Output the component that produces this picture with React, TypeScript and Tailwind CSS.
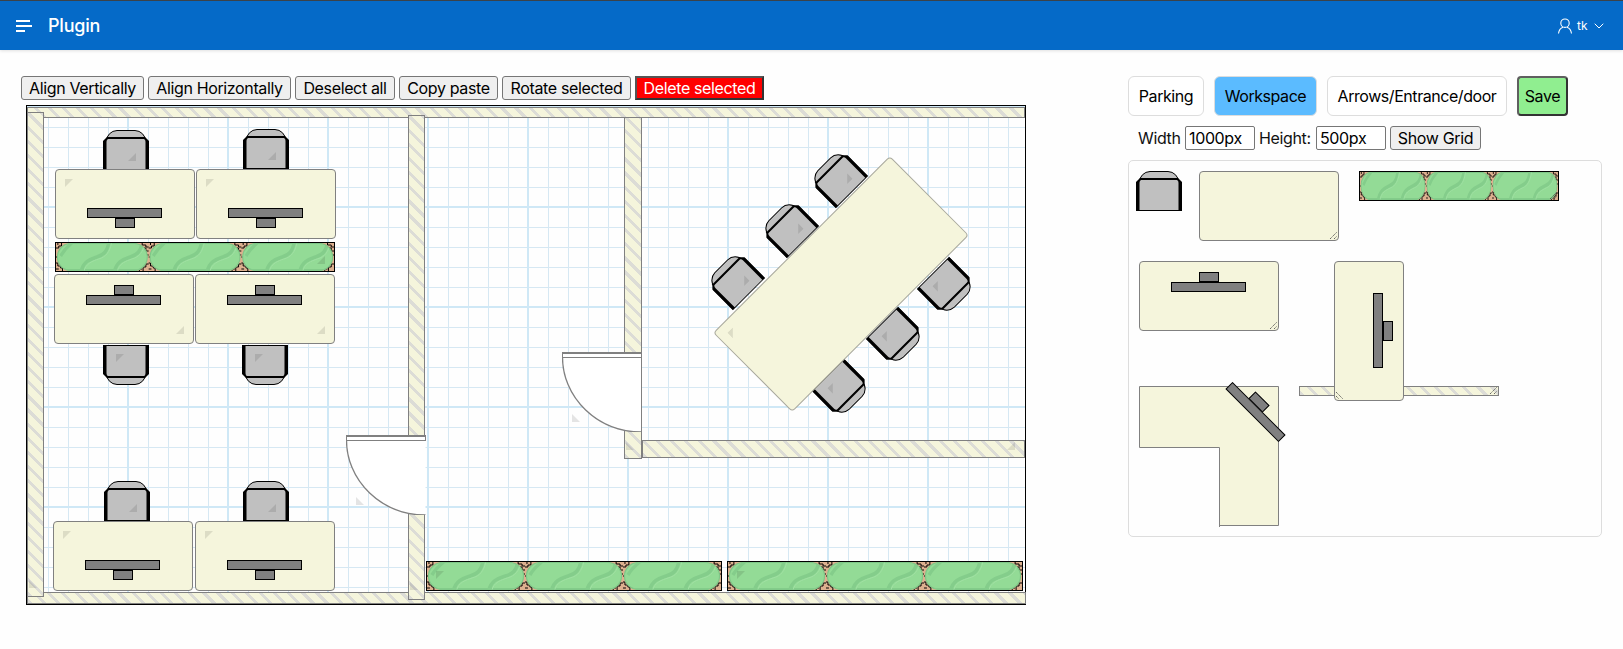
import React from "react";
import { ChevronDown } from "lucide-react";

const Tri = ({ className = "" }: { className?: string }) => (
  <div className={`absolute h-2 w-2 bg-black/10 [clip-path:polygon(100%_0,100%_100%,0_100%)] ${className}`} />
);

const Grabber = () => (
  <svg className="absolute bottom-0 right-0 h-[9px] w-[9px]" viewBox="0 0 9 9">
    <path d="M1 8 L8 1 M5 8 L8 5" stroke="#444" strokeWidth="0.8" strokeDasharray="1.4 0.6" fill="none" />
  </svg>
);

const Bar = ({ className = "" }: { className?: string }) => (
  <div className={`absolute border border-black bg-[#808080] ${className}`} />
);

function Desk({ className = "", flip = false, monitor = true, mark = false, grab = false }: { className?: string; flip?: boolean; monitor?: boolean; mark?: boolean; grab?: boolean }) {
  return (
    <div className={`absolute h-[70px] w-[140px] rounded-[4px] border border-[#808080] bg-[#f5f5dc] ${flip ? "rotate-180" : ""} ${className}`}>
      {monitor && (
        <>
          <Bar className={`top-[20px] h-[10px] w-[75px] ${flip ? "left-[32px]" : "left-[31px]"}`} />
          <Bar className="left-[59px] top-[10px] h-[10px] w-[20px]" />
        </>
      )}
      {mark && <Tri className="bottom-[9px] right-[9px]" />}
      {grab && <Grabber />}
    </div>
  );
}

function Chair({ className = "", mark = true }: { className?: string; mark?: boolean }) {
  return (
    <div className={`absolute h-[40px] w-[46px] ${className}`}>
      <svg className="block h-full w-full" viewBox="0 0 46 40">
        <path d="M3.5 11 A11 10.5 0 0 1 14 .5 H32 A11 10.5 0 0 1 42.5 11 Z" fill="#c0c0c0" stroke="#000" />
        <path d="M0 40 V11 L4 7 H42 L46 11 V40 Z" fill="#000" />
        <path d="M3.5 39 V12 Q3.5 8.5 7 8.5 H39 Q42.5 8.5 42.5 12 V39 Z" fill="#c0c0c0" />
        <path d="M5 8.5 H41" stroke="#000" />
      </svg>
      {mark && <Tri className="bottom-[9px] right-[13px]" />}
    </div>
  );
}

const crack =
  "M0 5 h3 v-2 h3 v-3 M2 0 v2 M0 20 h2 v3 h3 v2 h2 v3 M0 26 h3 M100 4 h-3 v-2 h-4 v-2 M94 5 h3 v3 h3 M100 21 h-3 v3 h-3 v4 M90 28 v-2 h3 M96 12 h4 M0 14 h2";

function Plant({ className = "", mark = "", grab = false }: { className?: string; mark?: string; grab?: boolean }) {
  return (
    <div className={`absolute h-[30px] border border-black bg-[#ddb08f] ${className}`}>
      <svg className="block h-full w-full" viewBox="0 0 300 28" preserveAspectRatio="none">
        <defs>
          <clipPath id="pill-clip">
            <rect x="1.5" y="0.5" width="97" height="27" rx="14" />
          </clipPath>
        </defs>
        {[0, 100, 200].map((x) => (
          <g key={x} transform={`translate(${x} 0)`}>
            <path d={crack} stroke="#000" strokeWidth="1" fill="none" />
            <rect x="1.5" y="0.5" width="97" height="27" rx="14" fill="#93db96" stroke="#7fc788" strokeWidth="1.2" />
            <g clipPath="url(#pill-clip)" fill="none">
              <path d="M0 27 H100" stroke="#83cc8a" strokeWidth="2" />
              <path d="M5 13 C8 8 12 4 17 0" stroke="#84cd8b" strokeWidth="3.5" />
              <path d="M27 29 C29 18 38 16 44 14 C52 12 55 8 57 0" stroke="#84cd8b" strokeWidth="3.5" />
              <path d="M63 29 C65 18 74 16 80 14 C88 12 91 8 93 0" stroke="#84cd8b" strokeWidth="3.5" />
              <path d="M30 29 C32 20 40 18 46 16 C54 14 58 9 60 0" stroke="#a0e0a3" strokeWidth="1" />
              <path d="M66 29 C68 20 76 18 82 16 C90 14 94 9 96 0" stroke="#a0e0a3" strokeWidth="1" />
            </g>
          </g>
        ))}
      </svg>
      {mark && <Tri className={mark} />}
      {grab && <Grabber />}
    </div>
  );
}

const hatch = "bg-[repeating-linear-gradient(45deg,#dcdcd6_0,#dcdcd6_3px,#f5f5dc_3px,#f5f5dc_10px)]";

function Wall({ className = "", children }: { className?: string; children?: React.ReactNode }) {
  return <div className={`absolute border border-[#808080] ${hatch} ${className}`}>{children}</div>;
}

function Door({ className = "", side = false }: { className?: string; side?: boolean }) {
  return (
    <div className={`absolute h-[80px] w-[80px] ${className}`}>
      <svg className="block h-full w-full" viewBox="0 0 80 80">
        <path d="M.5 5 A79 75 0 0 0 79.5 80 V5 Z" fill="#fff" stroke="none" />
        <path d="M.5 5 A79 75 0 0 0 79.5 80" fill="none" stroke="#808080" strokeWidth="1.3" />
        {side && <path d="M79.5 5 V80" stroke="#808080" />}
        <rect x="0" y="0" width="80" height="2" fill="#808080" />
        <rect x="0" y="2" width="80" height="3" fill="#fff" />
        <rect x="0" y="2" width="1" height="3" fill="#808080" />
        <rect x="79" y="2" width="1" height="3" fill="#808080" />
        <rect x="0" y="5" width="80" height="1" fill="#808080" />
      </svg>
      <Tri className="left-[10px] top-[62px] rotate-90" />
    </div>
  );
}

const toolBtn = "h-6 shrink-0 rounded-[3px] border border-[#767676] bg-[#efefef] pb-px text-center leading-[20px] text-black";
const tabBtn = "h-10 shrink-0 rounded-[6px] border border-[#dddddd] text-center tracking-[-0.44px] text-black";
const field = "h-6 w-[70px] shrink-0 rounded-[2px] border border-[#767676] bg-white px-[3px] text-black outline-none";

export default function App() {
  return (
    <div className="h-[649px] w-[1623px] overflow-hidden bg-[#fefefe] font-['Inter',sans-serif] text-[16px] tracking-[-0.36px] text-[#111]">
      <header className="flex h-[50px] items-center border-t border-t-[#3b4249] bg-[#056ac8] text-white shadow-[0_1px_3px_rgba(0,0,0,0.12)]">
        <svg className="ml-4 h-[14px] w-[17px]" viewBox="0 0 17 14">
          <path d="M0 2 H14 M0 7 H16 M0 12 H9" stroke="#fff" strokeWidth="2" fill="none" />
        </svg>
        <span className="ml-[15px] text-[18px] font-medium tracking-[-0.2px]">Plugin</span>
        <div className="ml-auto mr-4 flex items-center">
          <svg className="h-4 w-4" viewBox="0 0 16 16" fill="none" stroke="#fff" strokeWidth="1.1">
            <circle cx="8" cy="5.2" r="4.2" />
            <path d="M1.5 15.5 C2 11.8 4 9.8 6 9.2 M14.5 15.5 C14 11.8 12 9.8 10 9.2" />
          </svg>
          <span className="ml-1 w-[14px] text-[12px] tracking-normal">tk</span>
          <ChevronDown className="h-4 w-4" strokeWidth={1.5} />
        </div>
      </header>

      <main className="flex">
        <section className="w-[1128px] shrink-0 pl-[21px] pt-[26px]">
          <div className="flex h-6 gap-1">
            <button className={`${toolBtn} w-[123px]`}>Align Vertically</button>
            <button className={`${toolBtn} w-[143px]`}>Align Horizontally</button>
            <button className={`${toolBtn} w-[100px]`}>Deselect all</button>
            <button className={`${toolBtn} w-[99px]`}>Copy paste</button>
            <button className={`${toolBtn} w-[129px]`}>Rotate selected</button>
            <button className="h-6 w-[129px] shrink-0 border-2 border-[#555555] border-b-[#333333] border-r-[#333333] bg-[#ff0000] pb-px text-center leading-[18px] text-white">Delete selected</button>
          </div>

          <div className="relative ml-[5px] mt-[5px] h-[500px] w-[1000px] border border-black bg-[#fefefe] bg-[linear-gradient(#cfe8f6_2px,transparent_2px),linear-gradient(90deg,#cfe8f6_2px,transparent_2px),linear-gradient(#d6e8f3_1px,transparent_1px),linear-gradient(90deg,#d6e8f3_1px,transparent_1px)] [background-position:0_0,0_0,1px_1px,1px_1px] [background-size:100px_100px,100px_100px,20px_20px,20px_20px]">
            <Wall className="left-0 top-px h-[11px] w-[998px]" />
            <Wall className="bottom-0 left-0 h-[12px] w-[999px]" />
            <Wall className="left-0 top-[6px] h-[485px] w-[17px]">
              <Tri className="bottom-[8px] left-px rotate-90" />
            </Wall>
            <Wall className="left-[381px] top-[9px] h-[485px] w-[17px]">
              <Tri className="bottom-[9px] left-px rotate-90" />
            </Wall>
            <Wall className="left-[615px] top-[334px] h-[18px] w-[383px]">
              <Tri className="right-[9px] top-px" />
            </Wall>
            <Wall className="left-[597px] top-[11px] h-[342px] w-[18px]">
              <Tri className="bottom-[8px] left-px rotate-90" />
            </Wall>

            <Chair className="left-[76px] top-[24px]" />
            <Chair className="left-[216px] top-[23px]" />
            <Desk className="left-[28px] top-[63px]" flip mark />
            <Desk className="left-[169px] top-[63px]" flip mark />
            <Plant className="left-[28px] top-[136px] w-[280px]" mark="bottom-[7px] right-[9px]" />
            <Desk className="left-[27px] top-[168px]" mark />
            <Desk className="left-[168px] top-[168px]" mark />
            <Chair className="left-[76px] top-[239px] rotate-180" />
            <Chair className="left-[215px] top-[239px] rotate-180" />

            <Chair className="left-[77px] top-[375px]" />
            <Chair className="left-[216px] top-[375px]" />
            <Desk className="left-[26px] top-[415px]" flip mark />
            <Desk className="left-[168px] top-[415px]" flip mark />

            <Plant className="left-[399px] top-[455px] w-[296px]" mark="left-[9px] top-[9px] rotate-180" />
            <Plant className="left-[700px] top-[455px] w-[296px]" mark="left-[9px] top-[9px] rotate-180" />

            <Door className="left-[319px] top-[329px]" />
            <Door className="left-[535px] top-[246px]" side />

            <Chair className="left-[788px] top-[52px] -rotate-45" />
            <Chair className="left-[739px] top-[102px] -rotate-45" />
            <Chair className="left-[685px] top-[154px] -rotate-45" />
            <Chair className="left-[897px] top-[161px] rotate-[135deg]" />
            <Chair className="left-[846px] top-[211px] rotate-[135deg]" />
            <Chair className="left-[792px] top-[263px] rotate-[135deg]" />
            <div className="absolute left-[689px] top-[122px] h-[112px] w-[250px] rotate-[135deg] rounded-[4px] border border-[#a8a89c] bg-[#f5f5dc]">
              <Tri className="bottom-[9px] right-[9px]" />
            </div>
          </div>
        </section>

        <section className="w-[474px] shrink-0 pt-[26px]">
          <div className="flex gap-[10px]">
            <button className={`${tabBtn} w-[76px] bg-white`}>Parking</button>
            <button className={`${tabBtn} w-[103px] bg-[#5bbbff]`}>Workspace</button>
            <button className={`${tabBtn} w-[180px] bg-white`}>Arrows/Entrance/door</button>
            <button className="h-10 w-[51px] shrink-0 rounded-[4px] border-2 border-[#5f5f5f] border-b-[#333333] border-r-[#333333] bg-[#90ee90] text-center text-black">Save</button>
          </div>

          <div className="mt-[10px] flex h-6 items-center pl-[10px]">
            <span className="w-[47px] shrink-0">Width</span>
            <input className={field} defaultValue="1000px" />
            <span className="ml-1 w-[57px] shrink-0">Height:</span>
            <input className={field} defaultValue="500px" />
            <button className={`${toolBtn} ml-1 w-[91px]`}>Show Grid</button>
          </div>

          <div className="relative mt-[10px] h-[377px] w-[474px] rounded-[5px] border border-[#dddddd]">
            <Chair className="left-[7px] top-[10px]" mark={false} />
            <Desk className="left-[70px] top-[10px]" monitor={false} grab />
            <Plant className="left-[230px] top-[10px] w-[200px]" grab />
            <Desk className="left-[10px] top-[100px]" grab />
            <Wall className="left-[170px] top-[225px] h-[10px] w-[200px]">
              <Grabber />
            </Wall>
            <Desk className="left-[170px] top-[135px] rotate-90" grab />
            <div className="absolute left-[10px] top-[225px] h-[141px] w-[140px]">
              <svg className="block h-full w-full" viewBox="0 0 140 141">
                <path d="M.5 .5 H139.5 V139.5 H80.5 V61.5 H.5 Z" fill="#f5f5dc" stroke="#808080" />
                <path d="M80.5 139 V141" stroke="#808080" />
              </svg>
              <Bar className="left-[109.5px] top-[11px] h-[10px] w-[20px] rotate-45" />
              <Bar className="left-[79px] top-[21px] h-[10px] w-[75px] rotate-45" />
            </div>
          </div>
        </section>
      </main>
    </div>
  );
}
